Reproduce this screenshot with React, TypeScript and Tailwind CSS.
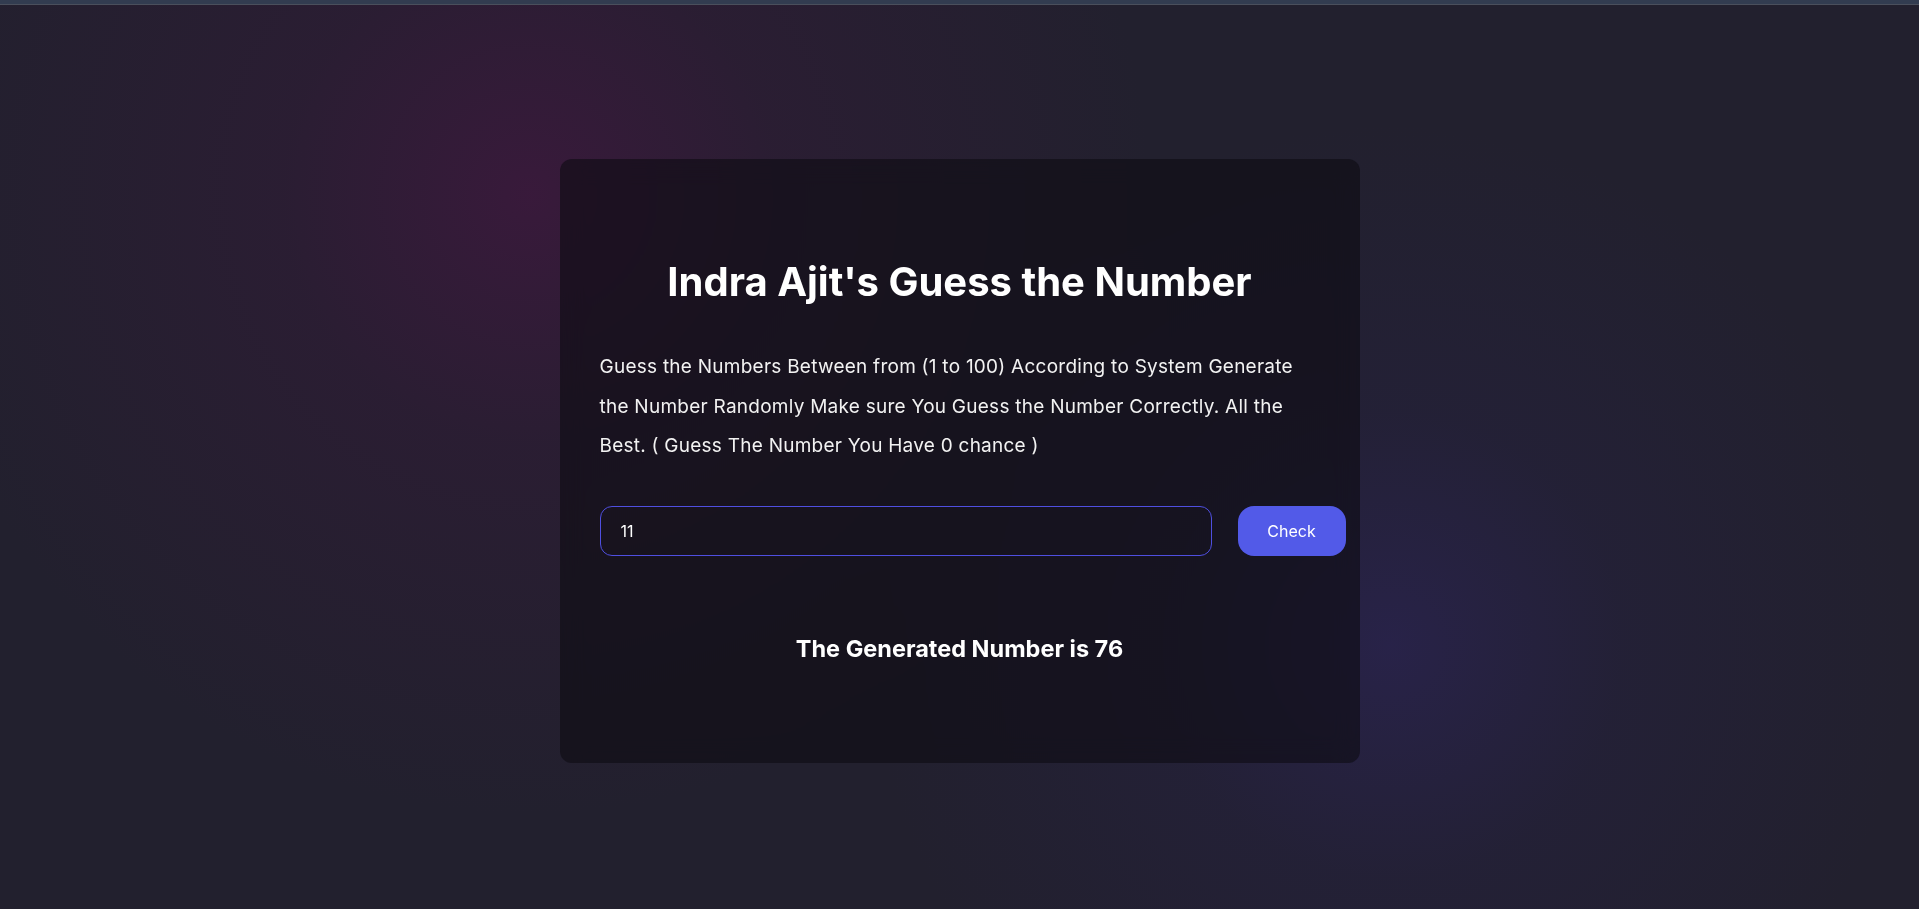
import React from "react";

export default function App() {
  return (
    <div
      className="min-h-[909px] w-full bg-[#22202e] flex flex-col"
      style={{ fontFamily: "Inter, 'Noto Sans', sans-serif" }}
    >
      <div className="h-[4px] w-full bg-[#323c50]" />
      <div className="h-[1px] w-full bg-[#4a4f5c]" />
      <div className="flex-1 flex justify-center pt-[154px] bg-[radial-gradient(620px_circle_at_530px_190px,rgba(62,24,62,0.8)_0%,rgba(52,26,56,0.45)_40%,transparent_100%),radial-gradient(520px_circle_at_1390px_640px,rgba(44,36,90,0.6)_0%,rgba(38,33,72,0.3)_45%,transparent_100%)]">
        <div className="w-[800px] h-[604px] rounded-[12px] bg-[rgba(14,11,18,0.6)] backdrop-blur-md flex flex-col px-[40px] pt-[99px]">
          <h1 className="text-center text-white font-bold text-[40px] leading-[48px]">
            Indra Ajit's Guess the Number
          </h1>
          <p className="mt-[41px] text-[#f2f2f2] text-[19px] leading-[39.5px] tracking-[0.25px] whitespace-nowrap">
            Guess the Numbers Between from (1 to 100) According to System Generate
            <br />
            the Number Randomly Make sure You Guess the Number Correctly. All the
            <br />
            Best. ( Guess The Number You Have 0 chance )
          </p>
          <div className="mt-[40px] flex items-center gap-[26px] w-[746px]">
            <input
              defaultValue="11"
              className="w-[612px] h-[50px] shrink-0 rounded-[12px] border border-[#4f4fe0] bg-transparent pl-[20px] text-white text-[16px] outline-none"
            />
            <button className="w-[108px] h-[50px] shrink-0 rounded-[16px] bg-[#525ae8] text-white text-[16px]">
              Check
            </button>
          </div>
          <h2 className="mt-[77px] text-center text-white font-bold text-[23.5px] leading-[32px]">
            The Generated Number is 76
          </h2>
        </div>
      </div>
    </div>
  );
}
